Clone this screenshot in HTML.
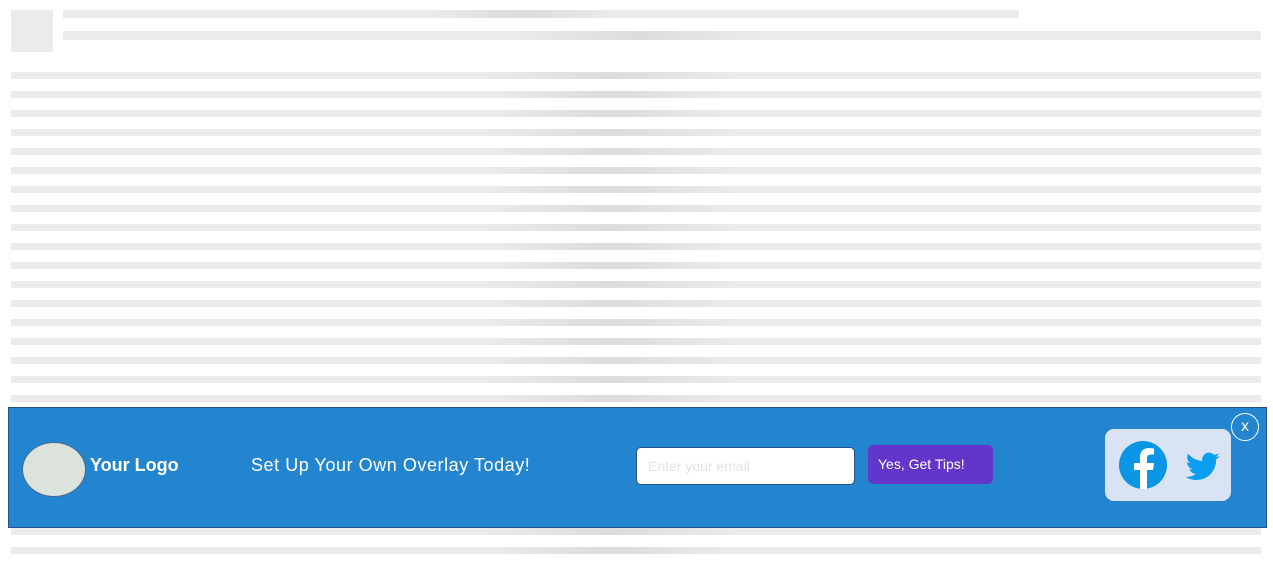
<!DOCTYPE html><html><head><style>
body{margin:0;width:1273px;height:568px;background:#fff;position:relative;overflow:hidden;font-family:"Liberation Sans",sans-serif}
.b{position:absolute;background:linear-gradient(90deg,#ebebeb 0%,#ebebeb 38%,#dcdcdc 48%,#ebebeb 58%,#ebebeb 100%)}
</style></head><body>
<div style="position:absolute;left:11px;top:10px;width:42px;height:42px;background:#ebebeb"></div>
<div class="b" style="left:63px;top:10px;width:956px;height:8px"></div>
<div class="b" style="left:63px;top:31px;width:1198px;height:9px"></div>
<script>
for(let k=0;k<26;k++){document.write('<div class="b" style="left:11px;top:'+(72+19*k)+'px;width:1250px;height:7px"></div>')}
</script>
<div style="position:absolute;left:8px;top:407px;width:1257px;height:119px;background:#2385d0;border:1px solid #27508a">
<div style="position:absolute;left:13px;top:34px;width:62px;height:53px;border-radius:50%;background:#dce2dc;border:1px solid #4a6a90"></div>
<div style="position:absolute;left:81px;top:47px;color:#fff;font-weight:bold;font-size:18px">Your Logo</div>
<div style="position:absolute;left:242px;top:47px;color:#fff;font-size:18px;letter-spacing:0.55px">Set Up Your Own Overlay Today!</div>
<div style="position:absolute;left:627px;top:39px;background:#fff;border:1px solid #27508a;border-radius:5px;color:#e3e3e3;font-size:14px;line-height:36px;padding-left:11px;box-sizing:border-box;width:219px;height:38px">Enter your email</div>
<div style="position:absolute;left:859px;top:37px;width:125px;height:39px;background:#6236c8;border-radius:5px;color:#fff;font-size:14px;line-height:39px;padding-left:10px;box-sizing:border-box">Yes, Get Tips!</div>
<div style="position:absolute;left:1096px;top:21px;width:126px;height:72px;background:#dae3f3;border-radius:9px">
<svg width="126" height="72" style="position:absolute;left:0;top:0">
<circle cx="38" cy="36" r="24" fill="#0a96e4"/>
<path d="M35 60V41h-6v-7h6v-6c0-6 4-9 9-9l5 .5v6h-3c-3 0-4 1.5-4 4V34h7l-1 7h-6v19z" fill="#fff"/>
<path transform="translate(80,20) scale(1.5)" d="M23 4.6c-.8.4-1.7.6-2.6.7.9-.6 1.6-1.4 2-2.5-.9.5-1.9.9-2.9 1.1C18.6 3 17.4 2.4 16 2.4c-2.5 0-4.6 2.1-4.6 4.6 0 .4 0 .7.1 1C7.7 7.8 4.4 6 2.1 3.2c-.4.7-.6 1.500-.6 2.3 0 1.6.8 3 2 3.8-.7 0-1.4-.2-2.1-.6v.1c0 2.2 1.6 4.1 3.7 4.5-.4.1-.8.2-1.2.2-.3 0-.6 0-.9-.1.6 1.8 2.3 3.2 4.3 3.2-1.6 1.2-3.6 2-5.7 2H.5c2 1.3 4.5 2.1 7.1 2.1 8.5 0 13.1-7 13.1-13.1v-.6c.9-.6 1.7-1.4 2.3-2.4z" fill="#0a9ef0"/>
</svg></div>
<div style="position:absolute;left:1222px;top:5px;width:28px;height:28px;border:1px solid #fff;border-radius:50%;box-sizing:border-box;color:#fff;text-align:center;line-height:26px;font-size:16px">x</div>
</div>
</body></html>
